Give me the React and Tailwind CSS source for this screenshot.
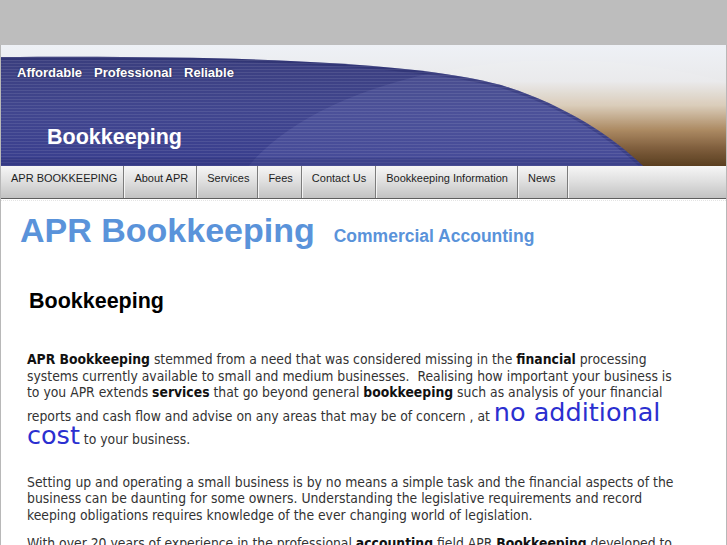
import React from "react";

function Banner() {
  return (
    <svg className="block w-full h-full" viewBox="0 0 725 121" preserveAspectRatio="none">
      <defs>
        <linearGradient id="bg" x1="0" y1="0" x2="0" y2="1">
          <stop offset="0" stopColor="#eef1f6" />
          <stop offset="0.3" stopColor="#e9e9eb" />
          <stop offset="0.5" stopColor="#d8cab6" />
          <stop offset="0.7" stopColor="#a8845a" />
          <stop offset="0.86" stopColor="#765330" />
          <stop offset="1" stopColor="#4f3312" />
        </linearGradient>
        <linearGradient id="navy" x1="0" y1="0" x2="0" y2="1">
          <stop offset="0" stopColor="#3a3e7e" />
          <stop offset="0.5" stopColor="#41468f" />
          <stop offset="1" stopColor="#393e8e" />
        </linearGradient>
        <pattern id="stripes" width="4" height="3" patternUnits="userSpaceOnUse">
          <rect width="4" height="1" fill="#ffffff" opacity="0.09" />
        </pattern>
        <clipPath id="navyClip">
          <path d="M0,12 C250,10 420,18 500,40 C560,58 610,90 642,121 L0,121 Z" />
        </clipPath>
      </defs>
      <rect width="725" height="121" fill="url(#bg)" />
      <ellipse cx="560" cy="190" rx="340" ry="175" fill="#ffffff" opacity="0.06" />
      <path d="M0,12 C250,10 420,18 500,40 C560,58 610,90 642,121 L0,121 Z" fill="url(#navy)" />
      <g clipPath="url(#navyClip)">
        <ellipse cx="560" cy="190" rx="340" ry="175" fill="#8a90d0" opacity="0.16" />
        <path d="M0,12 C250,10 420,18 500,40 C560,58 610,90 642,121" fill="none" stroke="#1f2260" strokeWidth="6" opacity="0.3" />
        <rect width="725" height="121" fill="url(#stripes)" />
        <rect y="113" width="725" height="8" fill="#2a2d70" opacity="0.3" />
      </g>
    </svg>
  );
}

const navItems = [
  { label: "APR BOOKKEEPING", pr: "pr-[6px]" },
  { label: "About APR", pr: "pr-[8px]" },
  { label: "Services", pr: "pr-[8px]" },
  { label: "Fees", pr: "pr-[8px]" },
  { label: "Contact Us", pr: "pr-[9px]" },
  { label: "Bookkeeping Information", pr: "pr-[9px]" },
  { label: "News", pr: "pr-[12px]" },
];

export default function App() {
  return (
    <div className="w-[727px] min-h-[545px] bg-white overflow-hidden" style={{ fontFamily: '"Liberation Sans", Arial, sans-serif' }}>
      <div className="h-[45px] bg-[#bdbdbd]" />
      <div className="border-x border-[#b8b8b8]">
        <div className="relative h-[121px]">
          <Banner />
          <div className="absolute left-[16px] top-[18px] flex gap-[12px] text-[13px] font-bold text-white [text-shadow:0_0_2px_rgba(0,0,0,0.5)]">
            <span>Affordable</span>
            <span>Professional</span>
            <span>Reliable</span>
          </div>
          <div className="absolute left-[46px] top-[79px] text-[21.5px] font-bold text-white leading-[26px]">
            Bookkeeping
          </div>
        </div>
        <div className="flex h-[33px] bg-gradient-to-b from-[#f6f6f6] via-[#dedede] to-[#c2c2c2] border-b border-[#5e5e5e]">
          {navItems.map((item) => (
            <div
              key={item.label}
              className={
                "pl-[10px] pt-[5px] text-[11px] text-[#1e1e1e] border-r border-[#7c7c7c] shadow-[1px_0_0_#f4f4f4] leading-[14px] " +
                item.pr
              }
            >
              {item.label}
            </div>
          ))}
        </div>
        <div className="h-[2px] border-b border-dotted border-[#e4e4e4]" />
        <div className="pb-10">
          <div className="flex items-baseline pl-[19px] pt-[9px]">
            <span className="text-[34px] font-bold text-[#5a93da] leading-[40px]">APR Bookkeeping</span>
            <span className="ml-[19px] text-[17.5px] font-bold text-[#5a93da]">Commercial Accounting</span>
          </div>
          <h2 className="mt-[38px] pl-[28px] text-[21.5px] font-bold text-black leading-[26px]">Bookkeeping</h2>
          <div
            className="pl-[26px] w-[683px] text-[13.8px] leading-[16.5px] text-[#333] font-stretch-condensed"
            style={{ fontFamily: '"DejaVu Sans Condensed", "DejaVu Sans", sans-serif' }}
          >
            <p className="mt-[37px]">
              <b className="text-[#111]">APR Bookkeeping</b> stemmed from a need that was considered missing in the{" "}
              <b className="text-[#111]">financial</b> processing systems currently available to small and medium
              businesses.&nbsp; Realising how important your business is to you APR extends{" "}
              <b className="text-[#111]">services</b> that go beyond general <b className="text-[#111]">bookkeeping</b>{" "}
              such as analysis of your financial reports and cash flow and advise on any areas that may be of concern
              , at{" "}
              <span
                className="text-[25.5px] leading-[22px] text-[#2b2fd0] font-stretch-normal"
                style={{ fontFamily: '"DejaVu Sans", sans-serif' }}
              >
                no additional cost
              </span>{" "}
              to your business.
            </p>
            <p className="mt-[26px]">
              Setting up and operating a small business is by no means a simple task and the financial aspects of the
              business can be daunting for some owners. Understanding the legislative requirements and record keeping
              obligations requires knowledge of the ever changing world of legislation.
            </p>
            <p className="mt-[12px]">
              With over 20 years of experience in the professional <b className="text-[#111]">accounting</b> field APR{" "}
              <b className="text-[#111]">Bookkeeping</b> developed to meet the needs of small business owners.
            </p>
          </div>
        </div>
      </div>
    </div>
  );
}
